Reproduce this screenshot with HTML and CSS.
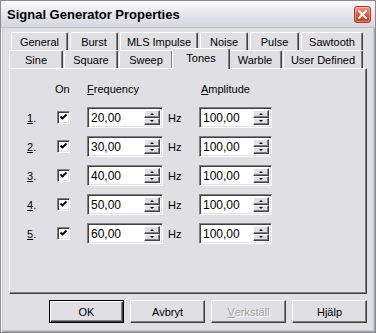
FILE: index.html
```html
<!DOCTYPE html>
<html>
<head>
<meta charset="utf-8">
<link rel="stylesheet" href="styles.css">
</head>
<body>
<div class="window">
  <div class="titlebar">
    <span class="title">Signal Generator Properties</span>
    <div class="close">
      <svg width="9" height="9" viewBox="0 0 9 9"><path d="M1 1 L8 8 M8 1 L1 8" stroke="#fff" stroke-width="2" stroke-linecap="square"/></svg>
    </div>
  </div>
  <div class="client">
    <div class="tabs">
      <div class="tabrow row1">
        <div class="tab">General</div>
        <div class="tab">Burst</div>
        <div class="tab">MLS Impulse</div>
        <div class="tab">Noise</div>
        <div class="tab">Pulse</div>
        <div class="tab">Sawtooth</div>
      </div>
      <div class="tabrow row2">
        <div class="tab">Sine</div>
        <div class="tab">Square</div>
        <div class="tab">Sweep</div>
        <div class="tab selected">Tones</div>
        <div class="tab">Warble</div>
        <div class="tab">User Defined</div>
      </div>
      <div class="panel">
        <div class="grid">
          <div class="head"></div>
          <div class="head on">On</div>
          <div class="head"><u>F</u>requency</div>
          <div class="head"></div>
          <div class="head amp"><u>A</u>mplitude</div>

          <div class="num"><u>1</u>.</div>
          <div class="cell"><span class="check"><svg width="9" height="9" viewBox="0 0 9 9"><path d="M1.5 3.5 L3.5 5.5 L7.5 1.5" fill="none" stroke="#000" stroke-width="1.8"/></svg></span></div>
          <div class="cell"><div class="spin wide"><span class="val">20,00</span><span class="btns"><span class="sb"><i class="up"></i></span><span class="sb"><i class="down"></i></span></span></div></div>
          <div class="cell hz">Hz</div>
          <div class="cell"><div class="spin"><span class="val">100,00</span><span class="btns"><span class="sb"><i class="up"></i></span><span class="sb"><i class="down"></i></span></span></div></div>

          <div class="num"><u>2</u>.</div>
          <div class="cell"><span class="check"><svg width="9" height="9" viewBox="0 0 9 9"><path d="M1.5 3.5 L3.5 5.5 L7.5 1.5" fill="none" stroke="#000" stroke-width="1.8"/></svg></span></div>
          <div class="cell"><div class="spin wide"><span class="val">30,00</span><span class="btns"><span class="sb"><i class="up"></i></span><span class="sb"><i class="down"></i></span></span></div></div>
          <div class="cell hz">Hz</div>
          <div class="cell"><div class="spin"><span class="val">100,00</span><span class="btns"><span class="sb"><i class="up"></i></span><span class="sb"><i class="down"></i></span></span></div></div>

          <div class="num"><u>3</u>.</div>
          <div class="cell"><span class="check"><svg width="9" height="9" viewBox="0 0 9 9"><path d="M1.5 3.5 L3.5 5.5 L7.5 1.5" fill="none" stroke="#000" stroke-width="1.8"/></svg></span></div>
          <div class="cell"><div class="spin wide"><span class="val">40,00</span><span class="btns"><span class="sb"><i class="up"></i></span><span class="sb"><i class="down"></i></span></span></div></div>
          <div class="cell hz">Hz</div>
          <div class="cell"><div class="spin"><span class="val">100,00</span><span class="btns"><span class="sb"><i class="up"></i></span><span class="sb"><i class="down"></i></span></span></div></div>

          <div class="num"><u>4</u>.</div>
          <div class="cell"><span class="check"><svg width="9" height="9" viewBox="0 0 9 9"><path d="M1.5 3.5 L3.5 5.5 L7.5 1.5" fill="none" stroke="#000" stroke-width="1.8"/></svg></span></div>
          <div class="cell"><div class="spin wide"><span class="val">50,00</span><span class="btns"><span class="sb"><i class="up"></i></span><span class="sb"><i class="down"></i></span></span></div></div>
          <div class="cell hz">Hz</div>
          <div class="cell"><div class="spin"><span class="val">100,00</span><span class="btns"><span class="sb"><i class="up"></i></span><span class="sb"><i class="down"></i></span></span></div></div>

          <div class="num"><u>5</u>.</div>
          <div class="cell"><span class="check"><svg width="9" height="9" viewBox="0 0 9 9"><path d="M1.5 3.5 L3.5 5.5 L7.5 1.5" fill="none" stroke="#000" stroke-width="1.8"/></svg></span></div>
          <div class="cell"><div class="spin wide"><span class="val">60,00</span><span class="btns"><span class="sb"><i class="up"></i></span><span class="sb"><i class="down"></i></span></span></div></div>
          <div class="cell hz">Hz</div>
          <div class="cell"><div class="spin"><span class="val">100,00</span><span class="btns"><span class="sb"><i class="up"></i></span><span class="sb"><i class="down"></i></span></span></div></div>
        </div>
      </div>
    </div>
    <div class="buttons">
      <div class="btn default">OK</div>
      <div class="btn">Avbryt</div>
      <div class="btn disabled"><u>V</u>erkställ</div>
      <div class="btn">Hjälp</div>
    </div>
  </div>
</div>
</body>
</html>
```

FILE: styles.css
```css
html, body {
  margin: 0;
  padding: 0;
  background: #e0dfe3;
}
.window {
  width: 376px;
  height: 333px;
  box-sizing: border-box;
  border: 1px solid #8a8a92;
  background: #e0dfe3;
  box-shadow: inset 1px 1px 0 #ffffff, inset -1px -1px 0 #a8a8b0, inset 2px 2px 0 #c8c8d0, inset -2px -2px 0 #c8c8d0;
  font-family: "Liberation Sans", Arial, sans-serif;
  font-size: 11px;
  color: #000;
}
.titlebar {
  height: 26px;
  display: flex;
  align-items: center;
  justify-content: space-between;
  padding: 0 4px 0 6px;
  background: linear-gradient(#fbfbfc 0%, #e8e8ee 45%, #d6d6de 100%);
  border-bottom: 1px solid #c0c0c8;
}
.title {
  font-weight: bold;
  font-size: 13px;
  color: #000;
  padding-top: 1px;
}
.close {
  width: 15px;
  height: 15px;
  border: 1px solid #a83820;
  border-radius: 3px;
  background: linear-gradient(#f09a88, #d8553c 55%, #c44428);
  display: flex;
  align-items: center;
  justify-content: center;
  box-shadow: inset 0 0 0 1px rgba(255,255,255,0.35);
}
.client {
  padding: 4px 8px 0 8px;
}
.tabs {
  display: flex;
  flex-direction: column;
}
.tabrow {
  display: flex;
  height: 18px;
}
.row1 {
  padding-left: 2px;
  padding-right: 4px;
}
.row2 {
  padding-right: 4px;
}
.tab {
  box-sizing: border-box;
  height: 18px;
  border-left: 1px solid #ffffff;
  border-top: 1px solid #ffffff;
  border-right: 1px solid #404040;
  border-top-left-radius: 2px;
  border-top-right-radius: 2px;
  box-shadow: inset -1px 0 0 #808080;
  background: #e0dfe3;
  display: flex;
  align-items: center;
  justify-content: center;
  padding-top: 1px;
  white-space: nowrap;
}
.row1 .tab:nth-child(1) { width: 57px; margin-right: 2px; }
.row1 .tab:nth-child(2) { width: 48px; margin-right: 2px; }
.row1 .tab:nth-child(3) { width: 78px; margin-right: 2px; }
.row1 .tab:nth-child(4) { width: 48px; margin-right: 2px; }
.row1 .tab:nth-child(5) { width: 49px; margin-right: 2px; }
.row1 .tab:nth-child(6) { width: 62px; }
.row2 .tab:nth-child(1) { width: 54px; margin-right: 1px; }
.row2 .tab:nth-child(2) { width: 54px; margin-right: 1px; }
.row2 .tab:nth-child(3) { width: 54px; margin-right: 1px; }
.row2 .tab:nth-child(4) { width: 54px; }
.row2 .tab:nth-child(5) { width: 54px; margin-right: 1px; }
.row2 .tab:nth-child(6) { width: 80px; }
.row2 .tab.selected {
  width: 58px;
  height: 21px;
  margin: -2px -2px -1px -2px;
  position: relative;
  z-index: 1;
  padding-top: 0;
  padding-bottom: 3px;
}
.panel {
  height: 226px;
  box-sizing: border-box;
  border-top: 1px solid #ffffff;
  border-left: 1px solid #ffffff;
  border-right: 1px solid #404040;
  border-bottom: 1px solid #404040;
  box-shadow: inset -1px -1px 0 #808080;
  padding: 11px 0 0 17px;
}
.grid {
  display: grid;
  grid-template-columns: 30px 30px 81px 31px 76px;
  grid-template-rows: 23px repeat(5, 29px);
}
.head {
  height: 18px;
  display: flex;
  align-items: center;
}
.head.on { margin-left: -2px; }
.head.amp { margin-left: 2px; }
.num, .cell {
  display: flex;
  align-items: center;
}
.hz {
  padding-left: 0;
  margin-left: 0;
}
.check {
  width: 9px;
  height: 9px;
  border-top: 1px solid #808080;
  border-left: 1px solid #808080;
  border-right: 1px solid #ffffff;
  border-bottom: 1px solid #ffffff;
  box-shadow: inset 1px 1px 0 #404040, inset -1px -1px 0 #e0dfe3;
  padding: 1px;
  background: #fff;
  display: flex;
}
.check svg { display: block; }
.spin {
  width: 73px;
  height: 21px;
  box-sizing: border-box;
  border-top: 1px solid #808080;
  border-left: 1px solid #808080;
  border-right: 1px solid #ffffff;
  border-bottom: 1px solid #ffffff;
  box-shadow: inset 1px 1px 0 #404040, inset -1px -1px 0 #e0dfe3;
  background: #fff;
  display: flex;
  align-items: stretch;
  padding: 2px 2px 2px 2px;
}
.spin.wide { width: 76px; }
.val {
  flex: 1;
  display: flex;
  align-items: center;
  padding-left: 1px;
  font-size: 12px;
}
.btns {
  width: 16px;
  display: flex;
  flex-direction: column;
  gap: 0;
}
.sb {
  flex: 1;
  box-sizing: border-box;
  background: #e0dfe3;
  border-top: 1px solid #ffffff;
  border-left: 1px solid #ffffff;
  border-right: 1px solid #404040;
  border-bottom: 1px solid #404040;
  box-shadow: inset -1px -1px 0 #808080;
  display: flex;
  align-items: center;
  justify-content: center;
}
.up, .down {
  width: 0;
  height: 0;
  border-left: 2px solid transparent;
  border-right: 2px solid transparent;
}
.up { border-bottom: 2px solid #000; }
.down { border-top: 2px solid #000; }
.buttons {
  display: flex;
  justify-content: flex-end;
  gap: 6px;
  margin-top: 6px;
}
.btn {
  width: 75px;
  height: 23px;
  box-sizing: border-box;
  border-top: 1px solid #ffffff;
  border-left: 1px solid #ffffff;
  border-right: 1px solid #404040;
  border-bottom: 1px solid #404040;
  box-shadow: inset -1px -1px 0 #808080;
  background: #e0dfe3;
  display: flex;
  align-items: center;
  justify-content: center;
}
.btn.default {
  border: 1px solid #000;
  box-shadow: inset 1px 1px 0 #ffffff, inset -1px -1px 0 #404040, inset -2px -2px 0 #808080;
}
.btn.disabled {
  color: #a0a0a0;
  text-shadow: 1px 1px 0 #ffffff;
}
```
